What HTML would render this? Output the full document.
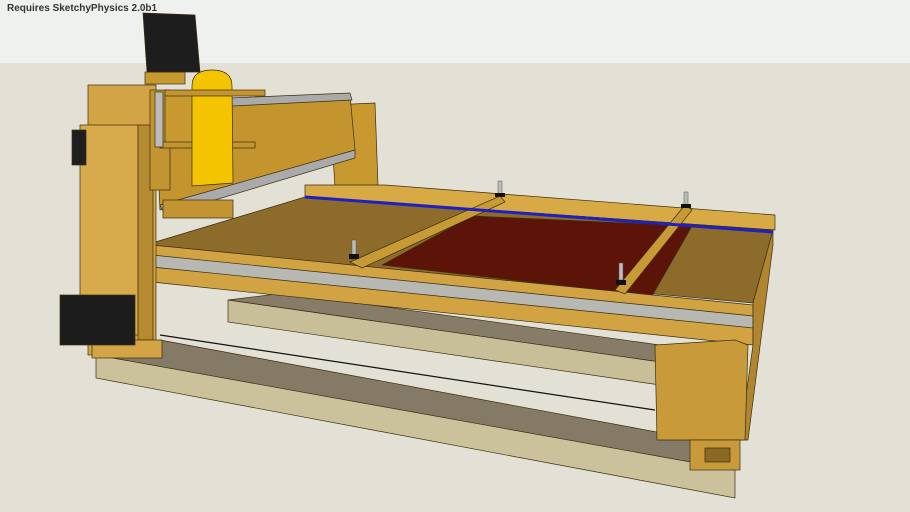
<!DOCTYPE html>
<html><head><style>
html,body{margin:0;padding:0;width:910px;height:512px;overflow:hidden;background:#e3e1d5}
.t{position:absolute;left:7px;top:3px;font:bold 10px "Liberation Sans",sans-serif;color:#333}
svg{position:absolute;left:0;top:0}
</style></head><body>
<svg width="910" height="512" viewBox="0 0 910 512">
<rect x="0" y="0" width="910" height="63" fill="#eff1ef"/>
<rect x="0" y="63" width="910" height="449" fill="#e3e1d5"/>
<g stroke="#3a2e10" stroke-width="0.7">
<!-- lower rails -->
<polygon points="228,300 285,293 660,345 660,362" fill="#867c68"/>
<polygon points="228,300 660,362 660,385 228,322" fill="#c8bf98"/>
<polygon points="96,355 160,340 700,440 700,465" fill="#847a66"/>
<polygon points="96,355 735,470 735,498 96,378" fill="#cbc29c"/>
<!-- back right post -->
<polygon points="330,105 375,103 378,185 335,188" fill="#c8992f"/>
<!-- back rail -->
<polygon points="305,185 385,185 775,215 775,230 305,197" fill="#d8aa45"/>
<!-- table top -->
<polygon points="152,243 305,197 773,230 753,303 152,248" fill="#8d6b2b"/>
<polygon points="382,265 472,216 692,226 652,296" fill="#5c1409"/>
<!-- front rail -->
<polygon points="152,245 753,305 753,345 152,282" fill="#d2a343"/>
<polygon points="152,255 753,316 753,328 152,267" fill="#b8b8b2"/>
<!-- right side of table -->
<polygon points="753,303 773,230 773,245 748,440 740,440 753,345" fill="#b08530"/>
<!-- right end block -->
<polygon points="655,345 735,340 748,345 745,440 657,440" fill="#c99a3a"/>
<rect x="690" y="440" width="50" height="30" fill="#c99a3a"/>
<rect x="705" y="448" width="25" height="14" fill="#8a6a22"/>
<!-- clamp bars -->
<polygon points="350,262 500,196 505,202 362,268" fill="#c89a35"/>
<polygon points="615,290 685,205 692,210 625,294" fill="#c89a35"/>
<!-- gantry beam -->
<polygon points="155,100 350,95 355,150 160,210" fill="#c4952e"/>
<polygon points="230,98 350,93 352,100 232,106" fill="#aaa"/>
<polygon points="160,205 355,150 355,158 165,215" fill="#aaa"/>
<!-- left frame -->
<rect x="88" y="85" width="68" height="270" fill="#d2a445"/>
<rect x="80" y="125" width="58" height="210" fill="#d7aa4c"/>
<rect x="138" y="125" width="15" height="215" fill="#b58a30"/>
<rect x="92" y="340" width="70" height="18" fill="#d2a445"/>
<rect x="72" y="130" width="14" height="35" fill="#1e1e1e"/>
<rect x="60" y="295" width="75" height="50" fill="#1c1c1c"/>
<!-- carriage -->
<rect x="145" y="72" width="40" height="12" fill="#c8992f"/>
<rect x="150" y="90" width="20" height="100" fill="#c39432"/>
<rect x="165" y="95" width="40" height="50" fill="#c8992f"/>
<rect x="160" y="142" width="95" height="6" fill="#c39432"/>
<rect x="163" y="200" width="70" height="18" fill="#c39432"/>
<rect x="155" y="92" width="8" height="55" fill="#bbb"/>
<!-- spindle -->
<path d="M192,86 Q192,70 212,70 Q232,70 232,86 L233,183 L192,186 Z" fill="#f5c400"/>
<rect x="165" y="90" width="100" height="6" fill="#c39432"/>
<!-- top motor -->
<polygon points="143,13 195,15 200,72 147,72" fill="#1d1d1d"/>
</g>
<!-- blue strip -->
<polyline points="305,197 773,232" stroke="#2020c0" stroke-width="3" fill="none"/>
<!-- belt -->
<line x1="160" y1="335" x2="655" y2="410" stroke="#111" stroke-width="1.2"/>
<!-- bolts -->
<g fill="#bbb" stroke="#555" stroke-width="0.5">
<rect x="352" y="240" width="4" height="16"/><rect x="498" y="181" width="4" height="14"/>
<rect x="684" y="192" width="4" height="14"/><rect x="619" y="263" width="4" height="17"/>
</g>
<g fill="#111"><rect x="349" y="254" width="10" height="5"/><rect x="495" y="193" width="10" height="4"/>
<rect x="681" y="204" width="10" height="4"/><rect x="616" y="280" width="10" height="5"/></g>
</svg>
<div class="t">Requires SketchyPhysics 2.0b1</div>
</body></html>
